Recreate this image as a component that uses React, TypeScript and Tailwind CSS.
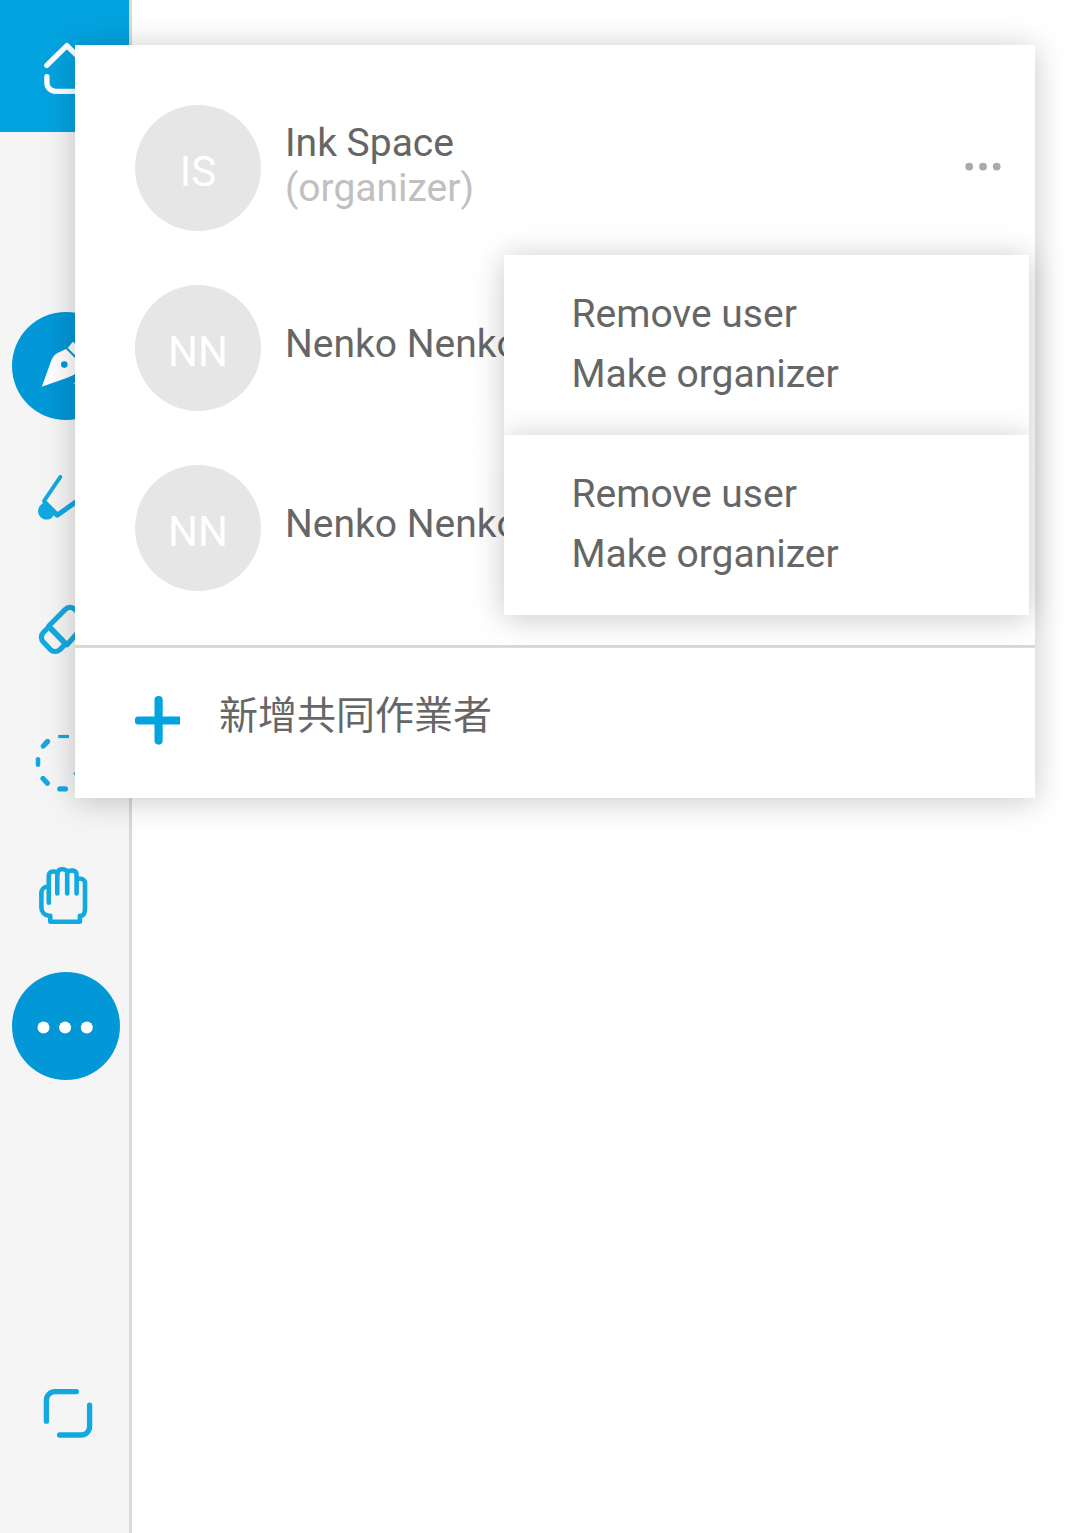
import type { ReactNode } from "react";

function Tool({ children, active = false }: { children: ReactNode; active?: boolean }) {
  return (
    <button className="flex h-[132px] w-[132px] shrink-0 items-center justify-center">
      <span
        className={
          active
            ? "flex size-[108px] items-center justify-center rounded-full bg-[#0297d7]"
            : "flex size-[108px] items-center justify-center"
        }
      >
        {children}
      </span>
    </button>
  );
}

const iconProps = {
  width: 108,
  height: 108,
  viewBox: "0 0 108 108",
  fill: "none",
  stroke: "#12a9e1",
  strokeWidth: 5.2,
  strokeLinecap: "round" as const,
  strokeLinejoin: "round" as const,
};

function HomeIcon() {
  return (
    <svg width="132" height="132" viewBox="0 0 132 132" fill="none" stroke="#fff" strokeWidth="5.3" strokeLinecap="round" strokeLinejoin="round">
      <path d="M46.8 65.3 66.9 45.6 87 65.3M46.9 76.6v5.9a8.5 8.5 0 0 0 8.5 8.8h23a8.5 8.5 0 0 0 8.5-8.8v-5.9" />
    </svg>
  );
}

function PenIcon() {
  return (
    <svg {...iconProps} stroke="none">
      <path fill="#fff" d="M29.8 74.8 39.5 48Q41.5 43 45.5 41L54 37 66 49v10.5Q62 63.5 56 65.5Z" />
      <path fill="#fff" d="m55.8 36 5-6.3L78 44l-7 7ZM61.5 71.8h22v-2h-20Z" />
      <circle cx="52.3" cy="52.6" r="3.3" fill="#0297d7" />
    </svg>
  );
}

function MarkerIcon() {
  return (
    <svg {...iconProps} strokeWidth="4">
      <path d="M48.3 33 32 57" />
      <path d="m32 58 13.2 13.2L74 50.8" strokeWidth="5" strokeLinecap="butt" />
      <path d="M34 56.5 45.5 68l-3.7 3.3a8.4 8.4 0 1 1-11.3-11.5Z" fill="#12a9e1" stroke="none" />
    </svg>
  );
}

function EraserIcon() {
  return (
    <svg {...iconProps}>
      <path d="m36.8 50 16.5-16.6a6.5 6.5 0 0 1 9.5 0l13 12L55 68.7Z" />
      <path d="m36.8 51-5.4 5.3a7 7 0 0 0 0 9.8l7 7.5a7 7 0 0 0 9.5 0l5.6-5.6Z" />
    </svg>
  );
}

function LassoIcon() {
  return (
    <svg {...iconProps}>
      <path d="M46.2 28.5h10.8" strokeWidth="3.2" strokeLinecap="butt" />
      <path d="m31.3 38 4.3-4.6M31 70.4l4.4 4.8M47.8 80.9h5.6" />
      <path d="M26 51.2v5.6" strokeWidth="4.5" />
      <path d="M61.2 64.6h3v5.5Z" fill="#12a9e1" stroke="none" />
    </svg>
  );
}

function HandIcon() {
  return (
    <svg {...iconProps} strokeWidth="4.6">
      <path d="M36.8 62.8V35.5a4 4 0 0 1 4-4h1.5a3 3 0 0 1 3 3v19M45.6 35v-2a3.8 3.8 0 0 1 3.8-3.8h2a3.8 3.8 0 0 1 3.8 3.8v20.5M55 35v-.6a3.8 3.8 0 0 1 3.8-3.8h2a3.8 3.8 0 0 1 3.8 3.8v19.1M64.6 38.8h4.2a4.2 4.2 0 0 1 4.2 4.2v25c0 3.5-1 7.3-3.5 7.8h-1.6v6H38.3v-6h-1.3C32.3 75.3 29.4 71.5 29.4 67.5V52.8a6 6 0 0 1 6-6h1.3" />
    </svg>
  );
}

function MoreIcon() {
  return (
    <svg {...iconProps} stroke="none">
      <g fill="#fff">
        <circle cx="31.5" cy="55.5" r="6" />
        <circle cx="53.1" cy="55.5" r="6" />
        <circle cx="74.8" cy="55.5" r="6" />
      </g>
    </svg>
  );
}

function FrameIcon() {
  return (
    <svg {...iconProps} strokeWidth="5.3">
      <path d="M34.4 62.2V41a8.5 8.5 0 0 1 8.5-8.4H64.4M77.6 46.2v21.4a8.5 8.5 0 0 1-8.5 8.4H47.6" />
    </svg>
  );
}

function Avatar({ initials }: { initials: string }) {
  return (
    <div className="flex size-[126px] shrink-0 items-center justify-center rounded-full bg-[#e6e6e6] pt-2 text-[42px] leading-[48px] text-white">
      {initials}
    </div>
  );
}

function Member({ initials, name, role }: { initials: string; name: string; role?: string }) {
  return (
    <div className="flex h-[126px] items-center">
      <Avatar initials={initials} />
      <div className={role ? "ml-6 pb-1 leading-[45px]" : "ml-6 pb-[7px] leading-[45px]"}>
        <div className="whitespace-nowrap">{name}</div>
        {role && <div className="text-[#c0c0c0]">{role}</div>}
      </div>
      {role && (
        <svg className="ml-auto" width="40" height="16" viewBox="0 0 40 16" fill="#aaa">
          <circle cx="7.2" cy="6.6" r="3.9" />
          <circle cx="21" cy="6.6" r="3.9" />
          <circle cx="34.7" cy="6.6" r="3.9" />
        </svg>
      )}
    </div>
  );
}

function UserMenu() {
  return (
    <div className="flex h-[180px] flex-col bg-white pt-[29px] pl-[67.5px] leading-[60px] shadow-[0_3px_30px_rgba(0,0,0,0.22)]">
      <button className="text-left">Remove user</button>
      <button className="text-left">Make organizer</button>
    </div>
  );
}

export default function App() {
  return (
    <div className="relative flex h-[1533px] w-[1080px] overflow-hidden bg-white font-['Roboto','Noto_Sans_CJK_TC',sans-serif] text-[39px] text-[#666]">
      <aside className="flex w-[132px] flex-col overflow-hidden border-r-[3px] border-[#d9d9d9] bg-[#f5f5f5]">
        <button className="h-[132px] w-[129px] shrink-0 overflow-hidden bg-[#03a3e0]">
          <HomeIcon />
        </button>
        <nav className="mt-[168px] flex flex-col">
          <Tool active><PenIcon /></Tool>
          <Tool><MarkerIcon /></Tool>
          <Tool><EraserIcon /></Tool>
          <Tool><LassoIcon /></Tool>
          <Tool><HandIcon /></Tool>
          <Tool active><MoreIcon /></Tool>
        </nav>
        <div className="mt-auto mb-[54px]">
          <Tool><FrameIcon /></Tool>
        </div>
      </aside>

      <section className="absolute top-[45px] left-[75px] flex h-[753px] w-[960px] flex-col bg-white shadow-[0_3px_30px_rgba(0,0,0,0.22)]">
        <div className="flex h-[603px] flex-col gap-[54px] border-b-[3px] border-[#d9d9d9] pt-[60px] pr-[33px] pl-[60px]">
          <Member initials="IS" name="Ink Space" role="(organizer)" />
          <Member initials="NN" name="Nenko Nenkov" />
          <Member initials="NN" name="Nenko Nenkov" />
        </div>
        <button className="flex h-[150px] items-start pt-[39px] pl-[60px]">
          <svg className="mt-2" width="45" height="52" viewBox="0 0 45 52" fill="none" stroke="#03a3e0" strokeWidth="8.2" strokeLinecap="round">
            <path d="M23.6 5v40.6" />
            <path d="M3 21.5h42v8H3a3 3 0 0 1-3-3v-2a3 3 0 0 1 3-3Z" fill="#03a3e0" stroke="none" />
          </svg>
          <span className="ml-[39px] leading-[58px]">新增共同作業者</span>
        </button>
        <div className="absolute top-[210px] left-[429px] w-[525px]">
          <UserMenu />
          <UserMenu />
        </div>
      </section>
    </div>
  );
}
